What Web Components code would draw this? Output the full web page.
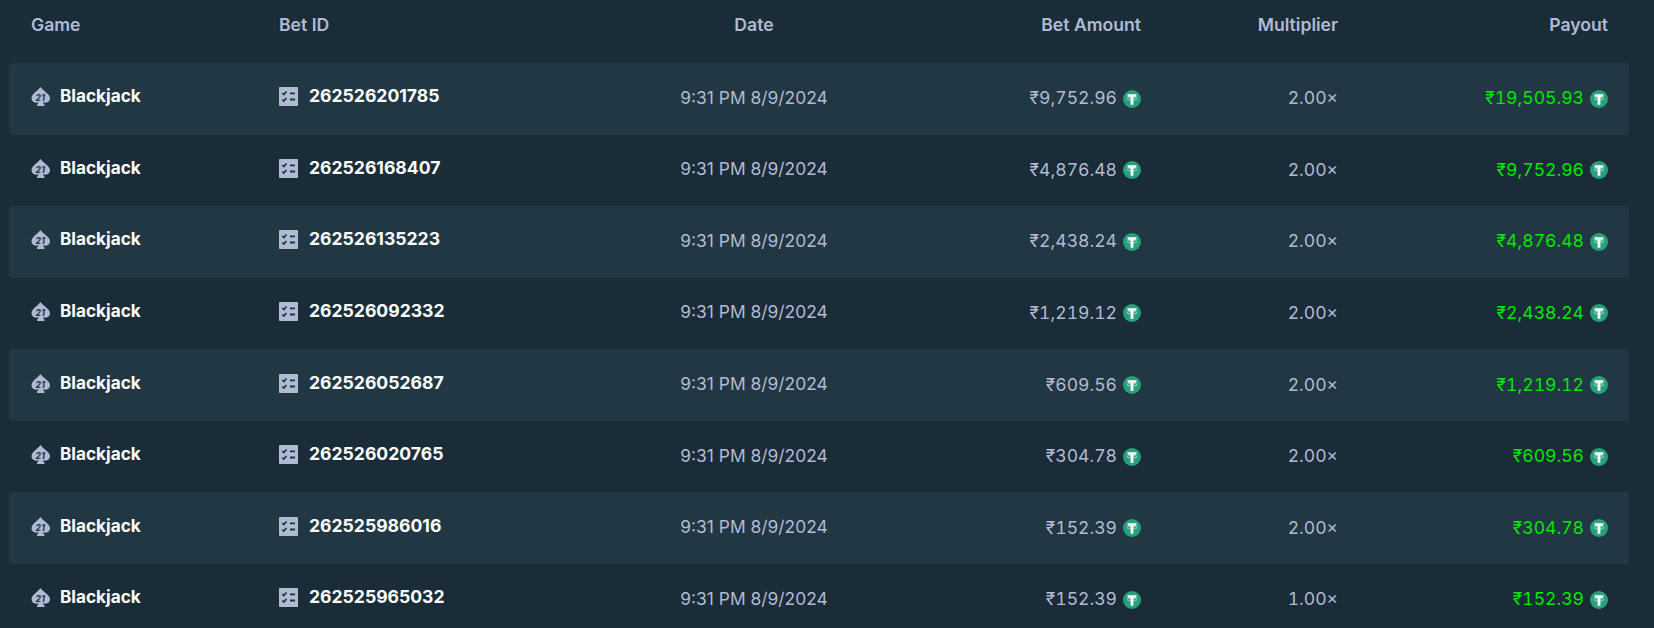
<!DOCTYPE html>
<html>
<head>
<meta charset="utf-8">
<title>Bets</title>
<style>
  html, body { margin: 0; height: 100%; overflow: hidden; background: #1a2c38; }
</style>
</head>
<body>
<bets-table></bets-table>

<script>
// shared column layout, both the header and the rows use it
const COLUMNS = "248px 225px 500px 137px 197px 270px";

// ================= Tether icon =================
class TetherIcon extends HTMLElement {
  constructor() {
    super();
    const shadow = this.attachShadow({ mode: "open" });
    shadow.innerHTML = `
      <style>
        :host { display: inline-flex; width: 18px; height: 18px; flex: none; }
        svg { display: block; width: 100%; height: 100%; }
      </style>
      <svg viewBox="0 0 18 18">
        <circle cx="9" cy="9" r="9" fill="#26a17b"/>
        <ellipse cx="9" cy="8.700" rx="5" ry="1.200" fill="none" stroke="#d8f0e8" stroke-width=".6"/>
        <path fill="#fff" d="M4.600 4.300h8.800v2.400h-3v8H7.600v-8h-3z"/>
      </svg>
    `;
  }
}
customElements.define("tether-icon", TetherIcon);

// ================= Blackjack spade icon =================
class SpadeIcon extends HTMLElement {
  constructor() {
    super();
    const shadow = this.attachShadow({ mode: "open" });
    shadow.innerHTML = `
      <style>
        :host { display: inline-flex; width: 19px; height: 19px; flex: none; }
        svg { display: block; width: 100%; height: 100%; }
        text { font: italic 800 8.500px Inter, sans-serif; letter-spacing: .5px; fill: #2a3f4d; }
      </style>
      <svg viewBox="0 0 19 19">
        <path fill="#b1bad3" d="M9.500 0c.9 1.300 2.300 2.600 3.900 3.900 2.800 2.300 5.600 4.300 5.600 7.400 0 2.700-2.100 4.400-4.500 4.400-.9 0-1.800-.2-2.500-.7.200 1 .7 1.800 1.500 2.700V19H6v-1.300c.8-.9 1.300-1.700 1.500-2.700-.7.500-1.600.7-2.500.7-2.400 0-4.500-1.700-4.500-4.400C.5 8.200 2.800 6.200 5.600 3.900 7.200 2.600 8.600 1.300 9.500 0z"/>
        <text x="9.500" y="13.500" text-anchor="middle">21</text>
      </svg>
    `;
  }
}
customElements.define("spade-icon", SpadeIcon);

// ================= Bet slip icon =================
class SlipIcon extends HTMLElement {
  constructor() {
    super();
    const shadow = this.attachShadow({ mode: "open" });
    shadow.innerHTML = `
      <style>
        :host { display: inline-flex; width: 19px; height: 19px; flex: none; }
        svg { display: block; width: 100%; height: 100%; }
      </style>
      <svg viewBox="0 0 19 19">
        <rect width="19" height="19" rx="1" fill="#b1bad3"/>
        <path fill="none" stroke="#1f3340" stroke-width="1.700" d="M3.300 6l1.500 1.500 2.700-3M3.300 12.500l1.500 1.500 2.700-3"/>
        <path fill="none" stroke="#1f3340" stroke-width="1.800" d="M11 6.300h5M11 12.500h5"/>
      </svg>
    `;
  }
}
customElements.define("slip-icon", SlipIcon);

// ================= One bet row =================
class BetRow extends HTMLElement {
  constructor() {
    super();
    const shadow = this.attachShadow({ mode: "open" });
    shadow.innerHTML = `
      <style>
        :host {
          display: grid;
          grid-template-columns: ${COLUMNS};
          align-items: center;
          height: 71.57px;
          box-sizing: border-box;
          padding: 0 20px 0 22px;
          border-radius: 4px;
          font-weight: 400;
          font-size: 17.600px;
          color: #b1bad3;
        }
        :host([striped]) { background: #213743; }
        .name, .id {
          display: flex;
          align-items: center;
          color: #fff;
          font-weight: 700;
          padding-bottom: 4px;
        }
        .name { gap: 10px; font-size: 17.200px; }
        .id { gap: 11px; font-size: 17.600px; }
        .label, .bet-id { padding-bottom: 2px; }
        .date { text-align: center; padding-bottom: 3px; font-size: 17.400px; }
        .num { display: flex; justify-content: flex-end; align-items: center; gap: 6px; font-variant-numeric: tabular-nums; }
        .num span { padding-bottom: 2px; }
        .win { color: #00e701; }
      </style>
      <div class="name"><spade-icon></spade-icon><span class="label"><slot name="game"></slot></span></div>
      <div class="id"><slip-icon></slip-icon><span class="bet-id"></span></div>
      <div class="date"></div>
      <div class="num"><span class="amount"></span><tether-icon></tether-icon></div>
      <div class="num"><span class="mult"></span></div>
      <div class="num win"><span class="payout"></span><tether-icon></tether-icon></div>
    `;
  }

  connectedCallback() {
    const root = this.shadowRoot;
    root.querySelector(".bet-id").textContent = this.getAttribute("bet-id");
    root.querySelector(".date").textContent = this.getAttribute("date");
    root.querySelector(".amount").textContent = this.getAttribute("amount");
    root.querySelector(".mult").textContent = this.getAttribute("mult");
    root.querySelector(".payout").textContent = this.getAttribute("payout");
  }
}
customElements.define("bet-row", BetRow);

// ================= Whole table =================
const BETS = [
  ["262526201785", "₹9,752.96", "2.00×", "₹19,505.93"],
  ["262526168407", "₹4,876.48", "2.00×", "₹9,752.96"],
  ["262526135223", "₹2,438.24", "2.00×", "₹4,876.48"],
  ["262526092332", "₹1,219.12", "2.00×", "₹2,438.24"],
  ["262526052687", "₹609.56", "2.00×", "₹1,219.12"],
  ["262526020765", "₹304.78", "2.00×", "₹609.56"],
  ["262525986016", "₹152.39", "2.00×", "₹304.78"],
  ["262525965032", "₹152.39", "1.00×", "₹152.39"],
];

class BetsTable extends HTMLElement {
  constructor() {
    super();
    const shadow = this.attachShadow({ mode: "open" });
    shadow.innerHTML = `
      <style>
        :host {
          display: block;
          padding: 0 25px 0 9px;
          font-family: Inter, "Noto Sans", sans-serif;
        }
        .head {
          display: grid;
          grid-template-columns: ${COLUMNS};
          align-items: center;
          height: 63px;
          padding: 0 20px 15px 22px;
          box-sizing: border-box;
          color: #b1bad3;
          font-weight: 600;
          font-size: 17.600px;
        }
        .head div:nth-child(3) { text-align: center; }
        .head div:nth-child(n+4) { text-align: right; }
      </style>
      <div class="head">
        <div>Game</div><div>Bet ID</div><div>Date</div>
        <div>Bet Amount</div><div>Multiplier</div><div>Payout</div>
      </div>
      <div class="rows"></div>
    `;
    const rows = shadow.querySelector(".rows");
    BETS.forEach((bet, i) => {
      const row = document.createElement("bet-row");
      if (i % 2 === 0) row.setAttribute("striped", "");
      row.setAttribute("bet-id", bet[0]);
      row.setAttribute("date", "9:31 PM 8/9/2024");
      row.setAttribute("amount", bet[1]);
      row.setAttribute("mult", bet[2]);
      row.setAttribute("payout", bet[3]);
      row.innerHTML = `<span slot="game">Blackjack</span>`;
      rows.appendChild(row);
    });
  }
}
customElements.define("bets-table", BetsTable);
</script>
</body>
</html>
